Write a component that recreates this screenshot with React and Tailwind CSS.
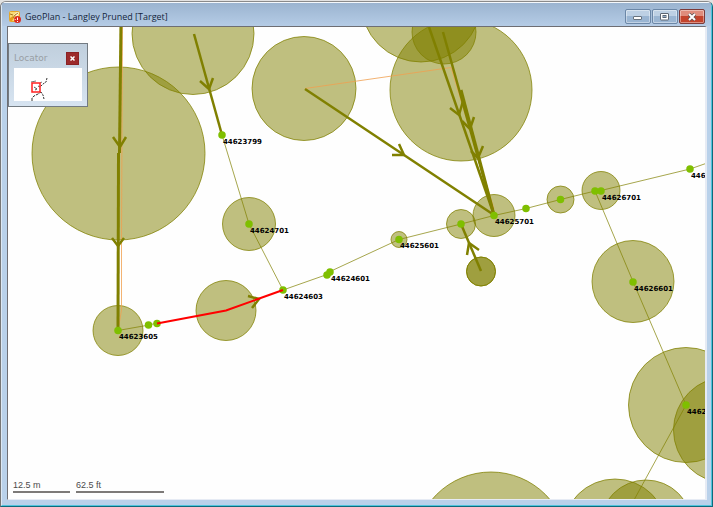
import React from "react";

const manholes = [
  { x: 118.5, y: 153.5, r: 86.5 },
  { x: 193, y: 33.5, r: 61 },
  { x: 304, y: 88.5, r: 52 },
  { x: 461, y: 90, r: 71 },
  { x: 421, y: 2, r: 60 },
  { x: 444, y: 32, r: 32 },
  { x: 249, y: 224, r: 26.5 },
  { x: 226, y: 310.5, r: 30 },
  { x: 118, y: 330.5, r: 25 },
  { x: 399, y: 239.5, r: 8 },
  { x: 461, y: 224, r: 14.5 },
  { x: 494, y: 215.5, r: 21 },
  { x: 481, y: 271.5, r: 14.5 },
  { x: 481, y: 271.5, r: 14.5 },
  { x: 560.5, y: 199.5, r: 13.5 },
  { x: 601, y: 190.5, r: 19 },
  { x: 633, y: 281.5, r: 41 },
  { x: 686, y: 405, r: 57.5 },
  { x: 726.5, y: 430, r: 53 },
  { x: 491, y: 549, r: 77 },
  { x: 615, y: 531, r: 52 },
  { x: 646, y: 526, r: 46 },
];

const pipes = [
  "118,330.5 149,325 157,323",
  "222,135 249,224 283,290",
  "283,290 327,274.5 330,271.5 399,239.5 461,224 494,215.5 526,208.5 560.5,199.5 595,191 601,190.5 690,169 713,161",
  "595,191 633,281.5 686,405 634,500",
];

const flows = [
  { line: "121,20 119.5,153", arrow: "113,137 120,147 126,137", w: 3 },
  { line: "118.5,153 118,330", arrow: "112,238 118,246 124,238", w: 3 },
  { line: "194,34 222,135", arrow: "200,81 209,89 213,78", w: 2.5 },
  { line: "305,89 494,215", arrow: "392,155 404,155 399,144", w: 2.5 },
  { line: "429,27 494,215", arrow: "450,108 459,115 463,101", w: 2.5 },
  { line: "443,32 494,215", arrow: "462,121 470,129 474,117", w: 2.5 },
  { line: "461,90 494,215", arrow: "471,151 478,158 483,146", w: 3 },
  { line: "481,271 461,224", arrow: "467,255 469,243 479,250", w: 2.5 },
];

const nodes = [
  { x: 222, y: 135, label: "44623799" },
  { x: 249, y: 224, label: "44624701" },
  { x: 283, y: 290, label: "44624603" },
  { x: 327, y: 275 },
  { x: 330, y: 272, label: "44624601" },
  { x: 399, y: 239.5, label: "44625601" },
  { x: 461, y: 224 },
  { x: 494, y: 215.5, label: "44625701" },
  { x: 526, y: 208.5 },
  { x: 560.5, y: 199.5 },
  { x: 595, y: 191 },
  { x: 601, y: 191, label: "44626701" },
  { x: 690, y: 169, label: "446" },
  { x: 633, y: 282, label: "44626601" },
  { x: 686, y: 405, label: "4462" },
  { x: 118, y: 330.5, label: "44623605" },
  { x: 148.5, y: 325 },
  { x: 157, y: 323.5 },
];

const NetworkMap = () => (
  <svg className="block w-full h-full" aria-label="Network map">
    {/* window coordinates, shifted by the frame and the title bar */}
    <g transform="translate(-8 -27)" fill="none">
      <g fill="#808000" fillOpacity="0.5" stroke="#808000" strokeOpacity="0.75">
        {manholes.map((m, i) => (
          <circle key={i} cx={m.x} cy={m.y} r={m.r} />
        ))}
      </g>
      <g stroke="#f0a050" strokeOpacity="0.8">
        <polyline points="305,88.5 451,67.5 494,209" />
        <polyline points="122.5,20 121.5,240 121.5,310 119,325" />
      </g>
      <g stroke="#808000" strokeOpacity="0.7">
        {pipes.map((p) => (
          <polyline key={p} points={p} />
        ))}
      </g>
      <g stroke="#808000">
        {flows.map((f) => (
          <g key={f.line} strokeWidth={f.w}>
            <polyline points={f.line} />
            <polyline points={f.arrow} strokeWidth="2.5" />
          </g>
        ))}
        <polyline points="248,296 259,299 252,308" strokeWidth="2.5" />
      </g>
      <g fill="#7fbf00">
        {nodes.map((n) => (
          <circle key={`${n.x}-${n.y}`} cx={n.x} cy={n.y} r="3.75" />
        ))}
      </g>
      <polyline points="157,323.5 226,310.5 283,290" stroke="#ff0000" strokeWidth="2" />
      <g fill="#000000" className="font-['DejaVu_Sans',sans-serif] text-[7px] font-bold">
        {nodes
          .filter((n) => n.label)
          .map((n) => (
            <text key={n.label} x={n.x + 1} y={Math.floor(n.y) + 9}>
              {n.label}
            </text>
          ))}
      </g>
    </g>
  </svg>
);

const AppIcon = () => (
  <svg width="12" height="12" viewBox="0 0 12 12" className="shrink-0">
    <rect x="0.5" y="0.5" width="10" height="10" rx="1" fill="#f8dc78" stroke="#e4a62c" />
    <path d="M1 10V7l3-2 1 2-2 3z" fill="#e8a01c" />
    <path d="M5 4l3-3 2 1-2 3z" fill="#fffbe0" />
    <path d="M1 3l3 1M4 7l2-3 3-2" stroke="#a87520" fill="none" />
    <circle cx="8.5" cy="8.5" r="3.5" fill="#dc2c20" />
    <path d="M8.5 6.5v2.5M8.5 10v1" stroke="#ffffff" />
    <path d="M5.5 8.5h1.5" stroke="#ffb0a0" />
  </svg>
);

const Locator = () => (
  <section className="absolute left-0 top-4 w-20 h-16 px-[5px] border border-[#737b82] bg-linear-to-b from-[#c0cfdd] to-[#d7e4f1]">
    <div className="flex items-center justify-between h-6 pt-1 pr-[3px]">
      <h2 className="font-['DejaVu_Sans',sans-serif] text-[9px] leading-3 text-[#999ea4]">Locator</h2>
      <button
        type="button"
        aria-label="Close locator"
        className="flex items-center justify-center w-[13px] h-[13px] bg-[#9c2a2b] border border-[#8a2224]"
      >
        <svg width="5" height="5" viewBox="0 0 5 5">
          <path d="M0.5 0.5l4 4M4.5 0.5l-4 4" stroke="#ffffff" strokeWidth="1.5" />
        </svg>
      </button>
    </div>
    <svg width="68" height="33" viewBox="0 0 68 33" className="block bg-white">
      {/* river network outline */}
      <g fill="none" stroke="#333333">
        <path d="M33 10l-1 4-3 2-3 3" strokeDasharray="2 1" />
        <path d="M18 33v-3l2-2 4-2 3-2" strokeDasharray="3 1" />
        <path d="M30 31l-1-4-2-3" strokeDasharray="2 1" />
        <path d="M17 14l5-1M26 15l2-1" stroke="#777777" />
        <path d="M20 19l3 2M24 18l2 1M21 22l2-1" stroke="#555555" />
      </g>
      <rect x="18" y="15" width="8" height="9" fill="none" stroke="#ff2020" strokeWidth="1.5" />
    </svg>
  </section>
);

const captionButton =
  "flex items-center justify-center w-[26px] h-[15px] rounded-xs border shadow-[inset_0_0_0_1px_rgba(255,255,255,0.4)]";

const TitleBar = () => (
  <header className="flex items-start justify-between h-[23px] pl-1.5 pt-1.5 bg-linear-to-b from-[#9bb4d0] to-[#b5cce6]">
    <div className="flex items-center gap-1 pt-0.5">
      <AppIcon />
      <h1 className="font-['Open_Sans',sans-serif] text-[9px] leading-3 text-[#14263c] whitespace-nowrap">
        GeoPlan - Langley Pruned [Target]
      </h1>
    </div>
    <div className="flex gap-px">
      <button
        type="button"
        aria-label="Minimize"
        className={`${captionButton} border-[#6b87a7] bg-linear-to-b from-[#bdd0e4] from-50% to-[#9ab5d2] to-50%`}
      >
        <svg width="10" height="8" viewBox="0 0 10 8">
          <rect x="0.5" y="3.5" width="8" height="3" rx="0.5" fill="#ffffff" stroke="#69737e" />
        </svg>
      </button>
      <button
        type="button"
        aria-label="Maximize"
        className={`${captionButton} border-[#6b87a7] bg-linear-to-b from-[#bdd0e4] from-50% to-[#9ab5d2] to-50%`}
      >
        <svg width="10" height="8" viewBox="0 0 10 8">
          <rect x="0.5" y="0.5" width="8" height="6.5" rx="0.5" fill="#ffffff" stroke="#5c6672" />
          <rect x="3" y="2.5" width="3" height="2" fill="#8faac6" stroke="#5c6672" />
        </svg>
      </button>
      <button
        type="button"
        aria-label="Close"
        className={`${captionButton} border-[#7c3a39] bg-linear-to-b from-[#df8c7c] from-50% to-[#c3432c] to-50%`}
      >
        <svg width="10" height="8" viewBox="0 0 10 8">
          <path d="M2 1l6 6M8 1L2 7" stroke="#5f5050" strokeWidth="3.5" />
          <path d="M2 1l6 6M8 1L2 7" stroke="#ffffff" strokeWidth="2" />
        </svg>
      </button>
    </div>
  </header>
);

const ScaleBar = () => (
  <div className="absolute left-[5px] bottom-1.5 flex gap-1.5 font-['Liberation_Sans',sans-serif] text-[9px] leading-3 text-[#4b4b4b]">
    <div className="w-[57px] border-b-2 border-[#7d7a78]">12.5 m</div>
    <div className="w-[88px] border-b-2 border-[#7d7a78]">62.5 ft</div>
  </div>
);

const App = () => {
  return (
    <div className="h-screen bg-[#e2e2e2] pt-px">
      <div className="flex flex-col h-full rounded-t-md overflow-hidden border border-t-[#8a8a8a] border-l-[#777777] border-r-[#0d6a7c] border-b-[#0d6a7c] bg-[#b9d1ea]">
        <div className="flex flex-col flex-1 min-h-0 border border-t-[#f4f8fc] border-l-[#dce8f4] border-r-[#50c4dc] border-b-[#50c4dc]">
          <div className="pl-px pr-1.5 bg-linear-to-b from-[#9bb4d0] to-[#b5cce6]">
            <TitleBar />
          </div>
          <main className="relative flex-1 min-h-0 ml-[5px] mr-1 mb-[5px] overflow-hidden bg-[#fefefe] border border-r-2 border-t-[#6e6e73] border-l-[#6e6e73] border-r-[#e6ebf4] border-b-[#e6ebf4]">
            <NetworkMap />
            <Locator />
            <ScaleBar />
          </main>
        </div>
      </div>
    </div>
  );
};

export default App;
